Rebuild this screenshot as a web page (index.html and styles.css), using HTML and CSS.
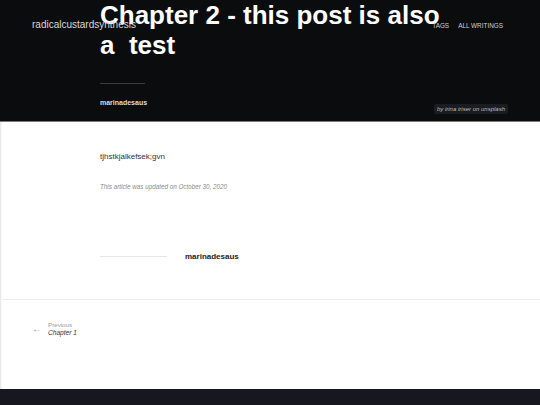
FILE: index.html
```html
<!DOCTYPE html>
<html lang="en">
<head>
  <meta charset="UTF-8">
  <title>Chapter 2 - this post is also a test</title>
  <link rel="stylesheet" href="styles.css">
</head>
<body>
  <header class="hero">
    <nav class="topbar">
      <a class="logo" href="#">radicalcustardsynthesis</a>
      <ul class="menu">
        <li><a href="#">Tags</a></li>
        <li><a href="#">All writings</a></li>
      </ul>
    </nav>
    <div class="hero-inner">
      <h1 class="title">Chapter 2 - this post is also a&nbsp; test</h1>
      <hr class="hero-rule">
      <span class="byline">marinadesaus</span>
    </div>
    <span class="credit">by irina iriser on unsplash</span>
  </header>

  <main class="post">
    <div class="post-body">
      <p class="content">tjhstkjalkefsek;gvn</p>
      <p class="updated">This article was updated on October 30, 2020</p>
      <div class="author">
        <span class="author-rule"></span>
        <span class="author-name">marinadesaus</span>
      </div>
    </div>
    <nav class="post-nav">
      <a class="prev" href="#">
        <span class="arrow">&larr;</span>
        <span class="prev-text">
          <span class="prev-label">Previous</span>
          <span class="prev-title">Chapter 1</span>
        </span>
      </a>
    </nav>
  </main>

  <footer class="site-footer"></footer>
</body>
</html>
```

FILE: styles.css
```css
*{margin:0;padding:0;box-sizing:border-box;}
body{font-family:"Liberation Sans",Arial,sans-serif;background:#fff;color:#222;}
a{text-decoration:none;color:inherit;}

/* header with cover */
.hero{position:relative;background:#0b0c0e;height:122px;border-bottom:1px solid #7a7a7a;}
.topbar{position:absolute;top:0;left:0;right:0;display:flex;justify-content:space-between;align-items:baseline;padding:14px 37px 0 32px;}
.logo{font-size:10px;color:#d8d8d8;}
.menu{list-style:none;display:flex;gap:9px;}
.menu a{font-size:6.4px;text-transform:uppercase;color:#d0d0d0;}
.hero-inner{padding-left:100px;width:445px;}
.title{font-size:26px;line-height:30px;font-weight:bold;color:#fff;}
.hero-rule{width:45px;border:none;border-top:1px solid #3c3c3f;margin:23px 0 15px;}
.byline{display:block;font-size:7px;font-weight:bold;color:#dcdcdc;}
.credit{position:absolute;right:32px;bottom:7px;background:#1b1c21;color:#bbb;font-size:6px;font-style:italic;padding:2px 3px;border-radius:2px;}

/* article */
.post{box-shadow:inset 2px 0 2px -1px #e2e2e2;}
.post-body{padding:29px 100px 0;}
.content{font-size:8px;line-height:12px;color:#333;}
.updated{font-size:6.3px;font-style:italic;color:#8a8a8a;margin-top:20px;}
.author{display:flex;align-items:center;gap:18px;margin-top:62px;padding-bottom:38px;border-bottom:1px solid #eee;margin-left:-100px;margin-right:-100px;padding-left:100px;}
.author-rule{width:67px;border-top:1px solid #e6e6e6;}
.author-name{font-size:8px;font-weight:bold;color:#222;}
.post-nav{padding:21px 32px 0;height:89px;}
.prev{display:flex;align-items:center;gap:6px;}
.arrow{font-size:10px;color:#999;}
.prev-text{display:flex;flex-direction:column;gap:1px;}
.prev-label{font-size:6.2px;color:#9a9a9a;}
.prev-title{font-size:6.6px;font-style:italic;color:#333;}

.site-footer{background:#17181f;height:16px;}
```
